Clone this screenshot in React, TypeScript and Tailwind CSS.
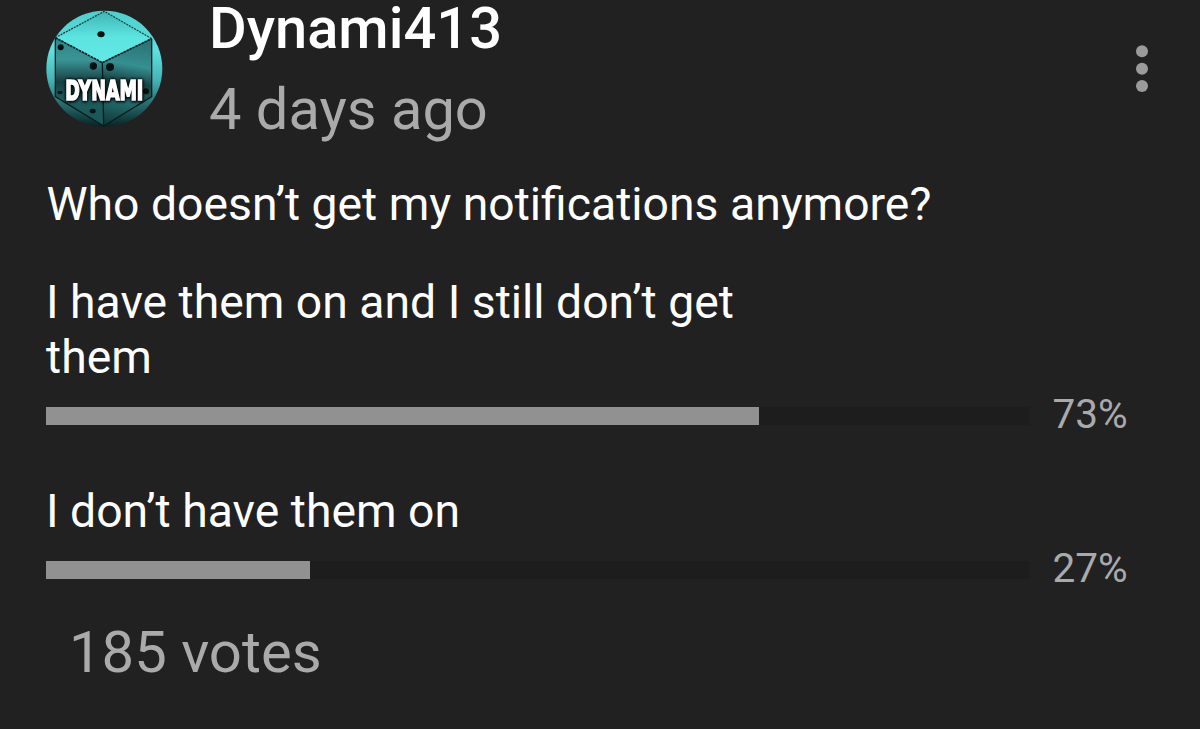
import React from 'react';

interface PollOption {
  label: string;
  percent: number;
  fill: number;
}

const options: PollOption[] = [
  { label: 'I have them on and I still don’t get them', percent: 73, fill: 713 },
  { label: 'I don’t have them on', percent: 27, fill: 264 },
];

const Avatar: React.FC = () => (
  <svg className="mt-[10px] h-[117px] w-[117px] shrink-0" viewBox="36 30 351 351">
    <defs>
      <clipPath id="round">
        <circle cx="211" cy="206" r="174" />
      </clipPath>
      <linearGradient id="back" x1="0" y1="0" x2="0" y2="1">
        <stop offset="0" stopColor="#4ccfcd" />
        <stop offset="0.35" stopColor="#5fe0de" />
        <stop offset="0.6" stopColor="#45b3b4" />
        <stop offset="0.85" stopColor="#1f5c5e" />
        <stop offset="1" stopColor="#0c2021" />
      </linearGradient>
      <linearGradient id="top" x1="0" y1="0" x2="0" y2="1">
        <stop offset="0" stopColor="#3fb5b4" />
        <stop offset="0.5" stopColor="#5ce4e1" />
        <stop offset="1" stopColor="#62e9e5" />
      </linearGradient>
      <linearGradient id="left" x1="0.3" y1="0" x2="0.3" y2="1">
        <stop offset="0" stopColor="#2f8486" />
        <stop offset="0.25" stopColor="#3a9496" />
        <stop offset="0.5" stopColor="#173f41" />
        <stop offset="0.7" stopColor="#1d5c5e" />
        <stop offset="1" stopColor="#1b5556" />
      </linearGradient>
      <linearGradient id="right" x1="0.6" y1="0" x2="0.5" y2="1">
        <stop offset="0" stopColor="#2a7173" />
        <stop offset="0.3" stopColor="#368f91" />
        <stop offset="0.5" stopColor="#1a4547" />
        <stop offset="0.75" stopColor="#226a6c" />
        <stop offset="1" stopColor="#133b3c" />
      </linearGradient>
    </defs>
    <g clipPath="url(#round)">
      <rect x="36" y="30" width="351" height="351" fill="url(#back)" />
      <path d="M211 34 353 116 205 188 64 113Z" fill="url(#top)" />
      <path d="M64 113 205 188 209 378 66 290Z" fill="url(#left)" />
      <path d="M205 188 353 116 353 290 209 378Z" fill="url(#right)" />
      <path d="M64 113 211 34 353 116" fill="none" stroke="#123c3d" strokeWidth="4" strokeDasharray="6 3" />
      <path d="M64 113 205 188 353 116" fill="none" stroke="#081d1e" strokeWidth="5" strokeDasharray="8 2" />
      <path d="M64 113V290L209 378 353 290V116M205 188 209 378" fill="none" stroke="#081d1e" strokeWidth="4" />
      <g fill="#061112">
        <ellipse cx="201" cy="103" rx="11" ry="9" />
        <circle cx="80" cy="142" r="9" />
        <circle cx="178" cy="198" r="11" />
        <circle cx="228" cy="201" r="12" />
        <circle cx="336" cy="274" r="9" />
        <ellipse cx="176" cy="333" rx="9" ry="7" />
        <ellipse cx="78" cy="277" rx="8" ry="5" />
      </g>
    </g>
    <text
      className="[filter:drop-shadow(0_0_4px_#000)_drop-shadow(1px_2px_3px_#000)]"
      x="211"
      y="300"
      textAnchor="middle"
      textLength="234"
      lengthAdjust="spacingAndGlyphs"
      fontFamily="'DejaVu Sans', sans-serif"
      fontWeight="bold"
      fontSize="78"
      fill="#ffffff"
      stroke="#ffffff"
      strokeWidth="5"
    >
      DYNAMI
    </text>
  </svg>
);

const MenuDots: React.FC = () => (
  <svg className="absolute left-[1134px] top-[44px] h-[50px] w-[16px]" viewBox="0 0 16 50" fill="#9b9b9b">
    <circle cx="8" cy="7.3" r="6" />
    <circle cx="8" cy="24.8" r="6" />
    <circle cx="8" cy="42" r="6" />
  </svg>
);

const PollRow: React.FC<{ option: PollOption }> = ({ option }) => (
  <div>
    <p className="w-[720px] text-[46.3px] leading-[55px]">{option.label}</p>
    <div className="mt-[7px] flex h-[48px] items-center">
      <div className="h-[18px] w-[983px] bg-[#1d1d1d]">
        <div className="h-full bg-[#919191]" style={{ width: option.fill }} />
      </div>
      <span className="mb-[4px] ml-[23.5px] text-[40.5px] leading-[48px] text-[#aaaaaa]">{option.percent}%</span>
    </div>
  </div>
);

export default function App() {
  return (
    <div className="relative h-[729px] w-[1200px] overflow-hidden bg-[#212121] pl-[46px] font-['Roboto',sans-serif] text-white">
      <div className="flex h-[138px]">
        <Avatar />
        <div className="ml-[46px] text-[57.8px] leading-[56px]">
          <h1 className="font-medium">Dynami413</h1>
          <p className="mt-[25px] text-[#aaaaaa]">4 days ago</p>
        </div>
      </div>
      <MenuDots />
      <p className="ml-[0.5px] mt-[39px] text-[46.3px] leading-[55px]">Who doesn’t get my notifications anymore?</p>
      <div className="mt-[43px] flex flex-col gap-[44px]">
        {options.map((option) => (
          <PollRow key={option.percent} option={option} />
        ))}
      </div>
      <p className="ml-[23px] mt-[30px] text-[58px] leading-[56px] text-[#aaaaaa]">185 votes</p>
    </div>
  );
}
